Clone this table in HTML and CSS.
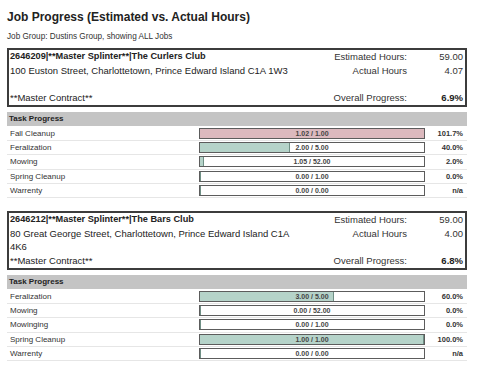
FILE: index.html
```html
<!DOCTYPE html>
<html>
<head>
<meta charset="utf-8">
<link rel="stylesheet" href="styles.css">
</head>
<body>
<div class="page">
  <h1 class="title">Job Progress (Estimated vs. Actual Hours)</h1>
  <p class="group">Job Group: Dustins Group, showing ALL Jobs</p>

  <section class="job">
    <div class="job-box">
      <div class="job-name">2646209|**Master Splinter**|The Curlers Club</div>
      <div class="job-addr">100 Euston Street, Charlottetown, Prince Edward Island C1A 1W3</div>
      <div class="job-contract">**Master Contract**</div>
      <div class="lbl r1">Estimated Hours:</div><div class="val r1">59.00</div>
      <div class="lbl r2">Actual Hours</div><div class="val r2">4.07</div>
      <div class="lbl r4">Overall Progress:</div><div class="val r4 strong">6.9%</div>
    </div>
    <div class="tasks">
      <div class="task-head">Task Progress</div>
      <div class="task"><span class="tname">Fall Cleanup</span><div class="bar"><div class="fill over" style="width:100%"></div><span class="btxt">1.02 / 1.00</span></div><span class="pct">101.7%</span></div>
      <div class="task"><span class="tname">Feralization</span><div class="bar"><div class="fill" style="width:40%"></div><span class="btxt">2.00 / 5.00</span></div><span class="pct">40.0%</span></div>
      <div class="task"><span class="tname">Mowing</span><div class="bar"><div class="fill" style="width:2%"></div><span class="btxt">1.05 / 52.00</span></div><span class="pct">2.0%</span></div>
      <div class="task"><span class="tname">Spring Cleanup</span><div class="bar"><div class="fill" style="width:0%"></div><span class="btxt">0.00 / 1.00</span></div><span class="pct">0.0%</span></div>
      <div class="task"><span class="tname">Warrenty</span><div class="bar"><div class="fill" style="width:0%"></div><span class="btxt">0.00 / 0.00</span></div><span class="pct">n/a</span></div>
    </div>
  </section>

  <section class="job">
    <div class="job-box">
      <div class="job-name">2646212|**Master Splinter**|The Bars Club</div>
      <div class="job-addr">80 Great George Street, Charlottetown, Prince Edward Island C1A 4K6</div>
      <div class="job-contract">**Master Contract**</div>
      <div class="lbl r1">Estimated Hours:</div><div class="val r1">59.00</div>
      <div class="lbl r2">Actual Hours</div><div class="val r2">4.00</div>
      <div class="lbl r4">Overall Progress:</div><div class="val r4 strong">6.8%</div>
    </div>
    <div class="tasks">
      <div class="task-head">Task Progress</div>
      <div class="task"><span class="tname">Feralization</span><div class="bar"><div class="fill" style="width:60%"></div><span class="btxt">3.00 / 5.00</span></div><span class="pct">60.0%</span></div>
      <div class="task"><span class="tname">Mowing</span><div class="bar"><div class="fill" style="width:0%"></div><span class="btxt">0.00 / 52.00</span></div><span class="pct">0.0%</span></div>
      <div class="task"><span class="tname">Mowinging</span><div class="bar"><div class="fill" style="width:0%"></div><span class="btxt">0.00 / 1.00</span></div><span class="pct">0.0%</span></div>
      <div class="task"><span class="tname">Spring Cleanup</span><div class="bar"><div class="fill" style="width:100%"></div><span class="btxt">1.00 / 1.00</span></div><span class="pct">100.0%</span></div>
      <div class="task"><span class="tname">Warrenty</span><div class="bar"><div class="fill" style="width:0%"></div><span class="btxt">0.00 / 0.00</span></div><span class="pct">n/a</span></div>
    </div>
  </section>
</div>
</body>
</html>
```

FILE: styles.css
```css
* { box-sizing: border-box; }
html, body { margin: 0; padding: 0; background: #fff; }
body {
  font-family: "Liberation Sans", Arial, sans-serif;
  color: #222;
}
.page {
  padding: 10px 0 0 7px;
  width: 467px;
}
.title {
  margin: 0;
  font-size: 12px;
  line-height: 14px;
  font-weight: bold;
  color: #222;
}
.group {
  margin: 8px 0 0 0;
  font-size: 8.2px;
  line-height: 10px;
  color: #333;
}
.job { margin-top: 6px; }
.job + .job { margin-top: 12.6px; }
.job-box {
  border: 2px solid #3c3c3c;
  display: grid;
  grid-template-columns: 288px 1fr 56px;
  grid-template-rows: repeat(4, 13.75px);
  padding: 0 2px 0 1px;
  font-size: 9.5px;
  line-height: 13.75px;
  color: #222;
}
.job-name { grid-column: 1; grid-row: 1; font-weight: bold; font-size: 9.2px; white-space: nowrap; }
.job-addr { grid-column: 1; grid-row: 2 / 4; }
.job-contract { grid-column: 1; grid-row: 4; }
.lbl { grid-column: 2; text-align: right; color: #333; }
.val { grid-column: 3; text-align: right; color: #333; }
.r1 { grid-row: 1; }
.r2 { grid-row: 2; }
.r4 { grid-row: 4; }
.strong { font-weight: bold; color: #222; }

.tasks { margin-top: 5px; }
.task-head {
  height: 14.4px;
  line-height: 14.4px;
  background: #c4c4c4;
  font-size: 8px;
  font-weight: bold;
  padding-left: 2px;
  color: #222;
}
.task {
  height: 14.4px;
  display: grid;
  grid-template-columns: 192px 226px 1fr;
  align-items: center;
  border-bottom: 1px solid #e6e6e6;
}
.tname {
  font-size: 8px;
  color: #333;
  padding-left: 3px;
}
.bar {
  height: 11px;
  border: 1px solid #5c5c5c;
  background: #fff;
  display: grid;
  grid-template-columns: 1fr;
  grid-template-rows: 1fr;
}
.fill {
  grid-area: 1 / 1;
  height: 100%;
  background: #b5d3c9;
  border-right: 1px solid #6f8f85;
}
.fill.over { background: #dcb9be; border-right: none; }
.btxt {
  grid-area: 1 / 1;
  text-align: center;
  font-size: 7px;
  line-height: 9px;
  font-weight: bold;
  color: #444;
}
.pct {
  text-align: right;
  padding-right: 4px;
  font-size: 7.5px;
  font-weight: bold;
  color: #333;
}
```
